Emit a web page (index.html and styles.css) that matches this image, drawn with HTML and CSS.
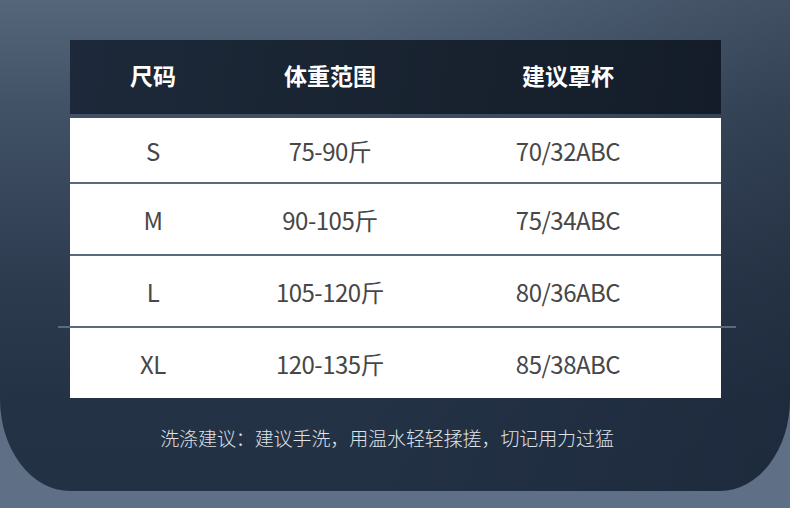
FILE: index.html
```html
<!DOCTYPE html>
<html lang="zh">
<head>
<meta charset="utf-8">
<link rel="stylesheet" href="styles.css">
</head>
<body>
<div class="page">
  <div class="panel">
    <div class="table">
      <div class="head">
        <div>尺码</div><div>体重范围</div><div>建议罩杯</div>
      </div>
      <div class="body">
        <div class="row first"><div>S</div><div>75-90斤</div><div>70/32ABC</div></div>
        <div class="row"><div>M</div><div>90-105斤</div><div>75/34ABC</div></div>
        <div class="row"><div>L</div><div>105-120斤</div><div>80/36ABC</div></div>
        <div class="row long"><div>XL</div><div>120-135斤</div><div>85/38ABC</div></div>
      </div>
    </div>
    <p class="note">洗涤建议：建议手洗，用温水轻轻揉搓，切记用力过猛</p>
  </div>
</div>
</body>
</html>
```
FILE: styles.css
```css
html, body {
  margin: 0;
  padding: 0;
}
body {
  width: 790px;
  height: 508px;
  overflow: hidden;
  font-family: "Noto Sans CJK SC", "Noto Sans", sans-serif;
}
.page {
  width: 790px;
  height: 508px;
  background: #5f6f85;
}
.panel {
  height: 491px;
  box-sizing: border-box;
  padding-top: 40px;
  border-radius: 0 0 70px 70px / 0 0 92px 92px;
  background:
    linear-gradient(to right, rgba(18, 28, 42, 0) 45%, rgba(18, 28, 42, 0.3) 100%),
    linear-gradient(to bottom, #55667b 0%, #415166 22%, #2d3b4f 58%, #243246 82%, #233145 100%);
}
.table {
  width: 651px;
  margin-left: 70px;
}
.head {
  height: 74px;
  display: grid;
  grid-template-columns: 166px 188px 288px;
  align-items: center;
  background: linear-gradient(100deg, #1d293a 0%, #18222f 60%, #141c29 100%);
  color: #ffffff;
  font-weight: 700;
  font-size: 23px;
  text-align: center;
  padding-bottom: 4px;
  box-sizing: border-box;
}
.body {
  margin-top: 4px;
  background: #ffffff;
}
.row {
  height: 70px;
  display: grid;
  grid-template-columns: 166px 188px 288px;
  align-items: center;
  text-align: center;
  color: #474747;
  font-size: 24px;
  font-weight: 400;
  letter-spacing: -0.5px;
  border-top: 2px solid #5a6b80;
  position: relative;
}
.row.first {
  height: 64px;
  border-top: none;
}
.row.long::before {
  content: "";
  position: absolute;
  left: -12px;
  right: -15px;
  top: -2px;
  height: 2px;
  background: #5a6b80;
}
.note {
  margin: 26px 16px 0 0;
  text-align: center;
  color: #dfe2e7;
  font-size: 19px;
  font-weight: 300;
  letter-spacing: -0.1px;
}
```
